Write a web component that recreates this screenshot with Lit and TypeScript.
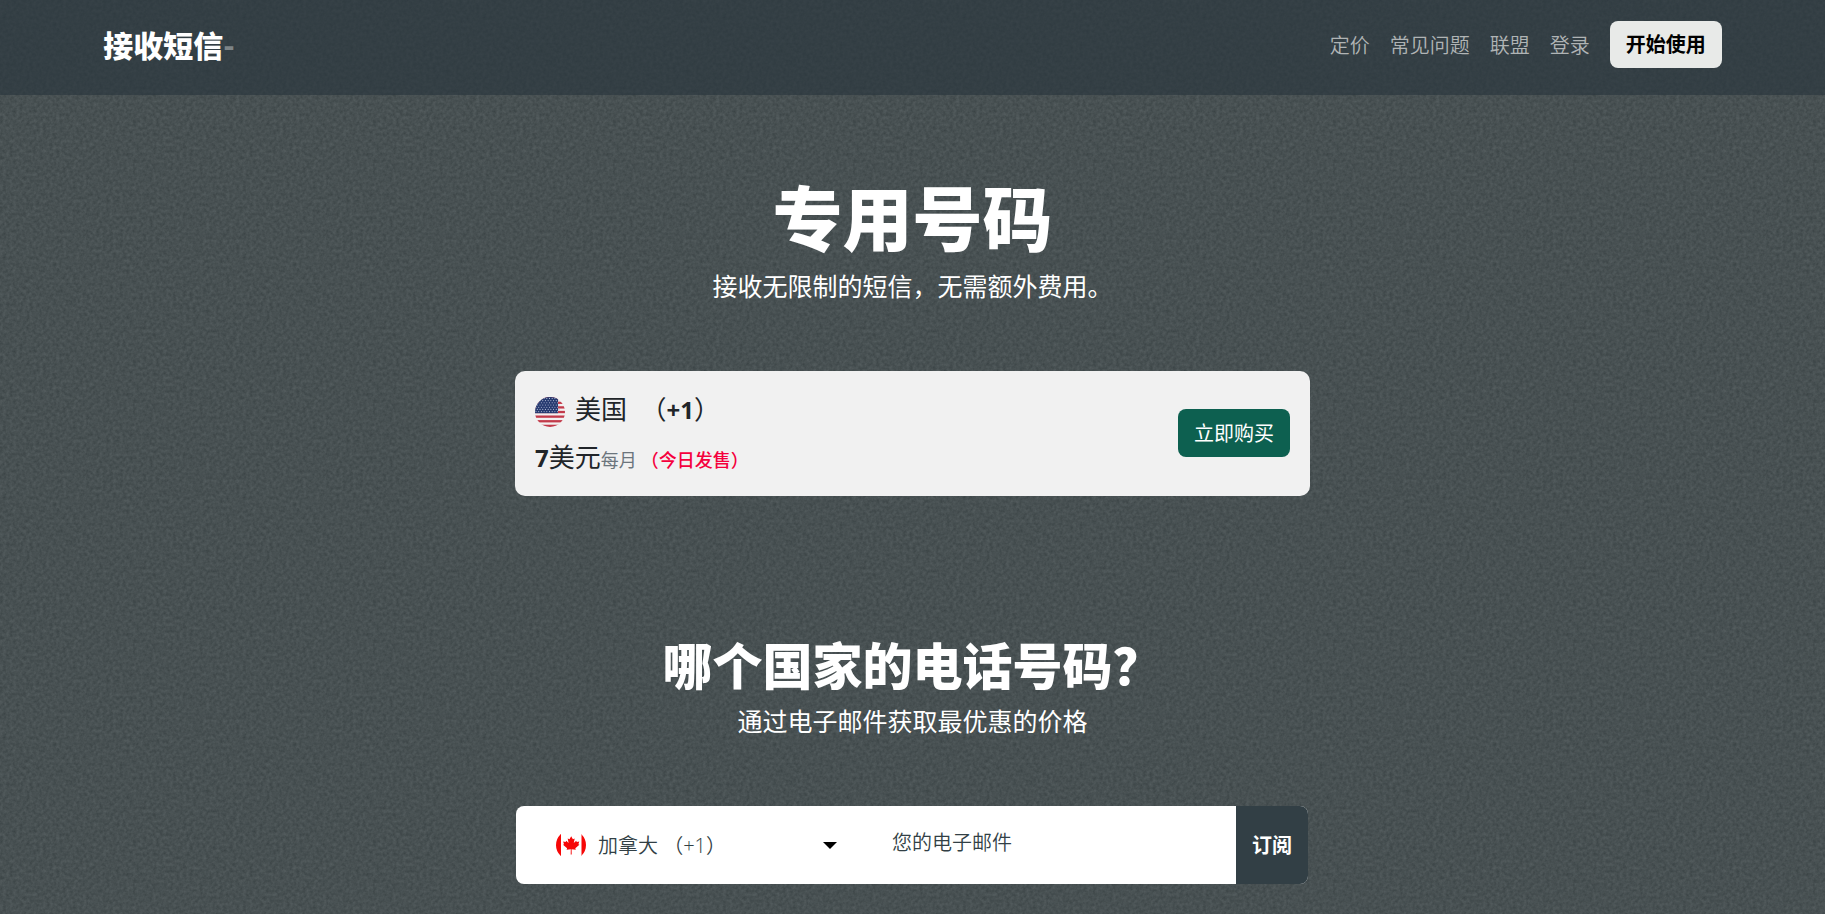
import { LitElement, html, css, svg } from "lit";
import { customElement, state } from "lit/decorators.js";

const starRows = Array.from({ length: 7 }, (_, r) => r);
const starCols = Array.from({ length: 9 }, (_, c) => c);

const usFlag = svg`
  <svg class="flag us" viewBox="0 0 30 30" aria-hidden="true">
    <defs><clipPath id="disc"><circle cx="15" cy="15" r="15"/></clipPath></defs>
    <g clip-path="url(#disc)">
      <rect width="30" height="30" fill="#f3f0f0"/>
      ${[0, 1, 2, 3, 4, 5, 6].map((i) => svg`<rect y=${i * 4.62} width="30" height="2.31" fill="#c23a4a"/>`)}
      <rect width="23" height="16.2" fill="#263a70"/>
      ${starRows.map((r) =>
        starCols.map((c) => svg`<circle cx=${1 + c * 2.7 + (r % 2) * 1.35} cy=${1.4 + r * 2.2} r=".55" fill="#b4bdd6"/>`)
      )}
    </g>
  </svg>`;

const caFlag = svg`
  <svg class="flag ca" viewBox="0 0 30 30" aria-hidden="true">
    <defs><clipPath id="oval"><circle cx="15" cy="15" r="15"/></clipPath></defs>
    <g clip-path="url(#oval)" fill="#f60707">
      <rect y="4" width="5" height="22"/>
      <rect x="25.5" y="4" width="5" height="22"/>
      <path d="M15.2 6.2l-1.7 3.1-1.8-.9.9 4.6-2.4-2.3-.6 1.3-2.5-.4.9 2.6-1 .6 4.1 3.5-.5 1.5 4.2-.6-.1 5.2h1l-.1-5.2 4.2.6-.5-1.5 4.1-3.5-1-.6.9-2.6-2.5.4-.6-1.3-2.4 2.3.9-4.6-1.8.9z"/>
    </g>
  </svg>`;

@customElement("app-root")
export class AppRoot extends LitElement {
  @state() private country = "ca";

  static styles = css`
    :host {
      display: block;
      min-height: 100vh;
      box-sizing: border-box;
      overflow: hidden;
      color: #fff;
      font-family: "Open Sans", "Noto Sans CJK SC", sans-serif;
      font-size: 20px;
      background-color: #475052;
      background-image: url("data:image/svg+xml,%3Csvg xmlns='http://www.w3.org/2000/svg' width='240' height='240'%3E%3Cfilter id='n' x='0' y='0' width='100%25' height='100%25' color-interpolation-filters='sRGB'%3E%3CfeTurbulence type='fractalNoise' baseFrequency='.3' numOctaves='3' stitchTiles='stitch'/%3E%3CfeColorMatrix values='.12 0 0 0 .222 .12 0 0 0 .256 .12 0 0 0 .263 0 0 0 0 1'/%3E%3C/filter%3E%3Crect width='240' height='240' filter='url(%23n)'/%3E%3C/svg%3E");
    }
    *, *::before, *::after { box-sizing: border-box; }
    a { text-decoration: none; }
    h1, h2, h3, p { margin: 0; }
    button { border: 0; font-family: inherit; font-size: 20px; cursor: pointer; }

    .header {
      background: rgba(41, 54, 62, 0.65);
      padding: 21px 0 27px;
    }
    .bar {
      width: 90%;
      margin: 0 auto;
      padding: 0 12px;
      display: flex;
      align-items: center;
      justify-content: space-between;
    }
    .brand {
      color: #fff;
      font-size: 30px;
      line-height: 44px;
      font-weight: 900;
    }
    .dash { color: #7d8487; font-family: "Noto Sans CJK SC", sans-serif; }
    .nav { display: flex; align-items: center; gap: 20px; }
    .link { color: #b0b4b5; font-weight: 350; line-height: 30px; padding-top: 3px; }
    .start {
      height: 47px;
      padding: 0 16px 2px;
      border-radius: 8px;
      background: #e8eae8;
      color: #000;
      font-weight: 700;
    }

    .section {
      max-width: 835px;
      margin: 0 auto;
      padding: 0 20px;
      text-align: center;
    }
    .offer { padding-top: 82px; }
    .signup { padding-top: 140px; padding-bottom: 29px; }
    .title { font-size: 70px; line-height: 84px; font-weight: 900; }
    .subtitle-head { font-size: 50px; line-height: 60px; font-weight: 900; }
    .lead { font-size: 25px; line-height: 38px; margin-top: 6px; }

    .card {
      margin-top: 66px;
      padding: 14px 20px 15px;
      border-radius: 10px;
      background: #f1f1f1;
      color: #212529;
      display: flex;
      align-items: center;
      justify-content: space-between;
      text-align: left;
    }
    .row {
      display: flex;
      align-items: center;
      height: 48px;
      font-size: 26px;
      font-weight: 400;
    }
    .row strong { font-size: 24px; font-weight: 700; }
    .price { align-items: baseline; line-height: 48px; }
    .flag { display: block; flex: none; width: 30px; height: 30px; }
    .us { margin: 6px 10px 0 0; }
    .name { white-space: pre; padding-bottom: 2px; }
    .per { font-size: 18px; color: #6c757d; }
    .sale { font-size: 18px; color: #f5003d; margin-left: 4px; font-weight: 500; }
    .buy {
      height: 48px;
      padding: 0 16px 2px;
      border-radius: 8px;
      background: #0d6050;
      color: #fff;
    }

    .form {
      margin: 66px 2px 0 1px;
      height: 78px;
      display: flex;
      border-radius: 8px;
      overflow: hidden;
      background: #fff;
    }
    .country { flex: 0 0 352px; display: grid; align-items: center; }
    .country > * { grid-area: 1 / 1; }
    .ca { margin-left: 40px; z-index: 1; pointer-events: none; }
    .caret {
      justify-self: end;
      margin-right: 31px;
      width: 14px;
      height: 7px;
      z-index: 1;
      pointer-events: none;
    }
    .select, .email {
      height: 100%;
      border: 0;
      outline: 0;
      background: transparent;
      color: #323f45;
      font: 350 20px "Open Sans", "Noto Sans CJK SC", sans-serif;
    }
    .select { appearance: none; width: 100%; padding: 0 48px 0 82px; }
    .email { flex: 1; min-width: 0; padding: 0 24px 6px; }
    .email::placeholder { color: #323f45; opacity: 1; }
    .subscribe {
      flex: 0 0 72px;
      padding: 0 0 2px;
      background: #323f45;
      color: #fff;
      font-weight: 700;
    }
  `;

  private pick(e: Event) {
    this.country = (e.target as HTMLSelectElement).value;
  }

  render() {
    return html`
      <header class="header">
        <div class="bar">
          <a class="brand" href="#">接收短信<span class="dash">-</span></a>
          <nav class="nav">
            <a class="link" href="#pricing">定价</a>
            <a class="link" href="#faq">常见问题</a>
            <a class="link" href="#affiliate">联盟</a>
            <a class="link" href="#login">登录</a>
            <button class="start" type="button">开始使用</button>
          </nav>
        </div>
      </header>
      <main>
        <section class="section offer">
          <h1 class="title">专用号码</h1>
          <p class="lead">接收无限制的短信，无需额外费用。</p>
          <article class="card">
            <div>
              <h3 class="row">${usFlag}<span class="name">美国 &nbsp;（<strong>+1</strong>）</span></h3>
              <p class="row price">
                <strong>7</strong>美元<span class="per">每月</span><span class="sale">（今日发售）</span>
              </p>
            </div>
            <button class="buy" type="button">立即购买</button>
          </article>
        </section>
        <section class="section signup">
          <h2 class="subtitle-head">哪个国家的电话号码？</h2>
          <p class="lead">通过电子邮件获取最优惠的价格</p>
          <form class="form" @submit=${(e: Event) => e.preventDefault()}>
            <div class="country">
              ${caFlag}
              <select class="select" aria-label="国家" .value=${this.country} @change=${this.pick}>
                <option value="ca">加拿大 （+1）</option>
              </select>
              <svg class="caret" viewBox="0 0 14 7" aria-hidden="true"><path d="M0 0h14l-7 7z" fill="#000"/></svg>
            </div>
            <input class="email" type="email" placeholder="您的电子邮件" aria-label="您的电子邮件" />
            <button class="subscribe" type="submit">订阅</button>
          </form>
        </section>
      </main>
    `;
  }
}
